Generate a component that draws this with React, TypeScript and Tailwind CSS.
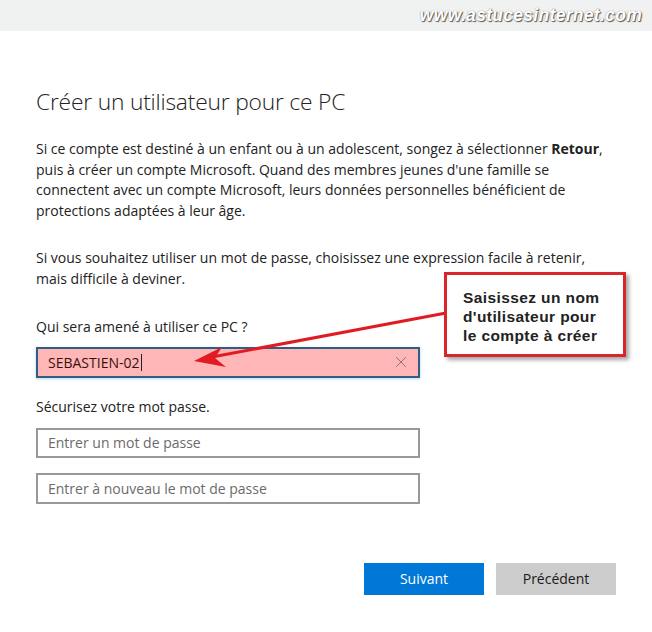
import { X } from "lucide-react";

const Callout = () => (
  <div className="absolute left-[444px] top-[272px] w-[182px] h-[85px] bg-white border-[3px] border-[#d8262b] shadow-[3px_3px_4px_rgba(0,0,0,0.35)] pl-[16px] pt-[13px] font-['Liberation_Sans',Arial,sans-serif] font-bold text-[15.5px] leading-[19px] text-[#222] tracking-[0.4px]">
    <p>Saisissez un nom</p>
    <p>d'utilisateur pour</p>
    <p>le compte à créer</p>
  </div>
);

const Arrow = () => (
  <svg className="absolute left-0 top-0 pointer-events-none" width="652" height="632">
    <line x1="446" y1="313" x2="212" y2="357" stroke="#e11b22" strokeWidth="3" />
    <polygon points="194,361 222,347 215,358 226,367" fill="#e11b22" />
  </svg>
);

export default function App() {
  return (
    <div className="relative w-[652px] h-[632px] bg-white overflow-hidden font-['Open_Sans','Noto_Sans',sans-serif] text-[#1a1a1a]">
      {/* barre du haut */}
      <div className="h-[31px] bg-[#f0f1f1] flex items-center justify-end pr-[10px]">
        <span className="font-['Liberation_Sans',Arial,sans-serif] italic font-bold text-[17.5px] text-white tracking-[0.3px] [text-shadow:1px_1px_1px_#555,0_0_1px_#777]">
          www.astucesinternet.com
        </span>
      </div>

      <div className="pl-[36px] pr-[30px]">
        <h1 className="mt-[56px] text-[22.8px] font-light text-[#222] leading-[30px] tracking-[-0.2px]">
          Créer un utilisateur pour ce PC
        </h1>

        <p className="mt-[22px] text-[14px] leading-[20.6px] text-[#222]">
          Si ce compte est destiné à un enfant ou à un adolescent, songez à sélectionner{" "}
          <b className="font-bold">Retour</b>,
          <br />
          puis à créer un compte Microsoft. Quand des membres jeunes d'une famille se
          <br />
          connectent avec un compte Microsoft, leurs données personnelles bénéficient de
          <br />
          protections adaptées à leur âge.
        </p>

        <p className="mt-[27px] text-[14px] leading-[20.6px] text-[#222]">
          Si vous souhaitez utiliser un mot de passe, choisissez une expression facile à retenir,
          <br />
          mais difficile à deviner.
        </p>

        <p className="mt-[27px] text-[14px] leading-[20px] text-[#222]">
          Qui sera amené à utiliser ce PC ?
        </p>

        <div className="mt-[10px] w-[384px] h-[31px] border-2 border-[#2f5d86] bg-[#ffb6b6] flex items-center pl-[10px] pr-[8px] shadow-[0_1px_3px_rgba(120,180,220,0.5)]">
          <span className="text-[14px] text-[#3a1010]">SEBASTIEN-02</span>
          <span className="w-px h-[17px] bg-[#222] ml-[1px]" />
          <X className="ml-auto text-[#8a6a6a]" size={18} strokeWidth={1.2} />
        </div>

        <p className="mt-[19px] text-[14px] leading-[20px] text-[#222]">
          Sécurisez votre mot passe.
        </p>

        <div className="mt-[11px] w-[384px] h-[30px] border-2 border-[#999] flex items-center pl-[10px]">
          <span className="text-[14px] text-[#6b6b6b]">Entrer un mot de passe</span>
        </div>

        <div className="mt-[15px] w-[384px] h-[31px] border-2 border-[#999] flex items-center pl-[10px]">
          <span className="text-[14px] text-[#6b6b6b]">Entrer à nouveau le mot de passe</span>
        </div>

        <div className="mt-[59px] flex justify-end gap-[12px] pr-[6px]">
          <button className="w-[120px] h-[32px] bg-[#0078d7] text-white text-[14px]">Suivant</button>
          <button className="w-[120px] h-[32px] bg-[#cccccc] text-[#1a1a1a] text-[14px]">Précédent</button>
        </div>
      </div>

      <Arrow />
      <Callout />
    </div>
  );
}
